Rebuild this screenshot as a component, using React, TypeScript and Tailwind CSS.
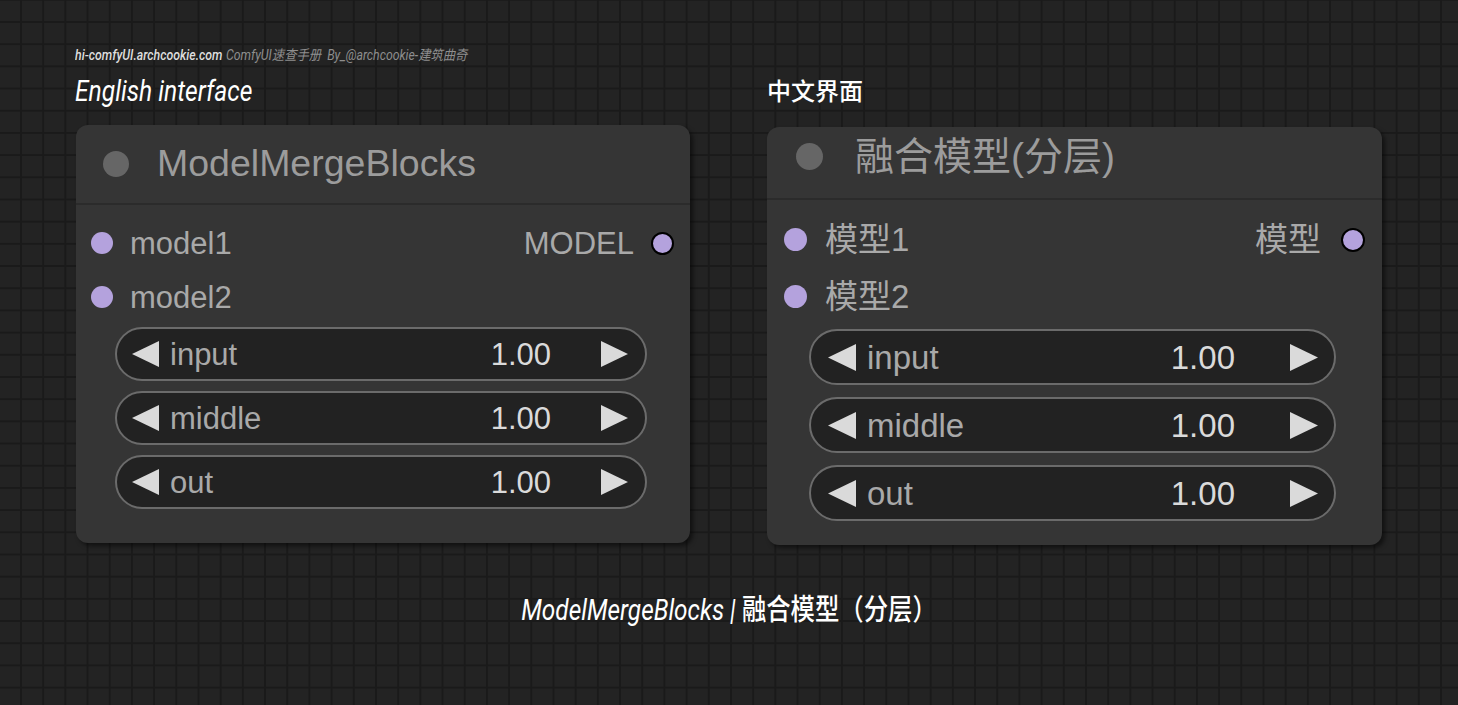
import React from "react"

const cjk = "font-['Liberation_Sans','Noto_Sans_CJK_SC',sans-serif]"
const condensed = "font-['Roboto','Noto_Sans_CJK_SC',sans-serif] italic"

type Variant = {
  box: string
  title: string
  titleDot: string
  titleText: string
  body: string
  row: string
  rowText: string
  outText: string
  inDot: string
  outDot: string
  widgets: string
  pill: string
  arrowGap: string
  valueGap: string
  arrow: string
}

const en: Variant = {
  box: "w-[614px] h-[418px] ml-[1px] mt-[16px]",
  title: "h-[80px] pl-[27px] gap-[28px]",
  titleDot: "w-[26px] h-[26px]",
  titleText: "text-[37.5px]",
  body: "pt-[11px]",
  row: "h-[54px] pl-[15px] pr-[16px]",
  rowText: "text-[31px] ml-[17px]",
  outText: "text-[31px]",
  inDot: "w-[22px] h-[22px]",
  outDot: "w-[23px] h-[23px] ml-[17px]",
  widgets: "mt-[3px] gap-[10px] ml-[39px] w-[532px]",
  pill: "h-[54px] pl-[15px] pr-[17px] text-[31px]",
  arrowGap: "ml-[11px]",
  valueGap: "mr-[50px]",
  arrow: "w-[27px] h-[26px]",
}

const zh: Variant = {
  box: "w-[615px] h-[418px] mt-[20px]",
  title: "h-[73px] pb-[12px] pl-[29px] gap-[32px]",
  titleDot: "w-[27px] h-[27px]",
  titleText: "text-[39px]",
  body: "pt-[11px]",
  row: "h-[57px] pl-[17px] pr-[17px]",
  rowText: "text-[33px] ml-[18px]",
  outText: "text-[33px]",
  inDot: "w-[23px] h-[23px]",
  outDot: "w-[24px] h-[24px] ml-[20px]",
  widgets: "mt-[4px] gap-[12px] ml-[42px] w-[527px]",
  pill: "h-[56px] pl-[17px] pr-[16px] text-[33px]",
  arrowGap: "ml-[11px]",
  valueGap: "mr-[55px]",
  arrow: "w-[28px] h-[27px]",
}

function Arrow({ dir, cls }: { dir: "l" | "r"; cls: string }) {
  return (
    <svg viewBox="0 0 28 27" className={`${cls} shrink-0`}>
      <polygon points={dir === "l" ? "28,0 28,27 0,13.5" : "0,0 0,27 28,13.5"} fill="#dadada" />
    </svg>
  )
}

function Node({
  v,
  title,
  inputs,
  output,
}: {
  v: Variant
  title: string
  inputs: string[]
  output: string
}) {
  const widgets = ["input", "middle", "out"]
  return (
    <div className={`${v.box} rounded-[12px] bg-[#353535] shadow-[3px_3px_4px_rgba(0,0,0,0.5)] flex flex-col ${cjk}`}>
      {/* header */}
      <div className={`${v.title} flex items-center border-b-2 border-[#2b2b2b] shrink-0`}>
        <div className={`${v.titleDot} rounded-full bg-[#666666]`} />
        <span className={`${v.titleText} text-[#9c9c9c] leading-none whitespace-nowrap`}>{title}</span>
      </div>

      <div className={v.body}>
        {inputs.map((name, i) => (
          <div key={name} className={`${v.row} flex items-center`}>
            <div className={`${v.inDot} rounded-full bg-[#b4a2dd] shrink-0`} />
            <span className={`${v.rowText} text-[#a9a9a9] leading-none`}>{name}</span>
            {i === 0 && (
              <>
                <span className={`ml-auto ${v.outText} text-[#a9a9a9] leading-none`}>{output}</span>
                <div className={`${v.outDot} rounded-full bg-[#b4a2dd] border-2 border-black shrink-0`} />
              </>
            )}
          </div>
        ))}

        <div className={`${v.widgets} flex flex-col`}>
          {widgets.map((w) => (
            <div
              key={w}
              className={`${v.pill} flex items-center rounded-full border-2 border-[#6b6b6b] bg-[#222222] leading-none`}
            >
              <Arrow dir="l" cls={v.arrow} />
              <span className={`${v.arrowGap} text-[#a9a9a9]`}>{w}</span>
              <span className={`ml-auto ${v.valueGap} text-[#dadada]`}>1.00</span>
              <Arrow dir="r" cls={v.arrow} />
            </div>
          ))}
        </div>
      </div>
    </div>
  )
}

export default function App() {
  return (
    <div className="w-[1458px] h-[705px] overflow-hidden flex flex-col pt-[45px] bg-[#232323] bg-[linear-gradient(to_right,#1a1a1a_2px,transparent_2px),linear-gradient(to_bottom,#1a1a1a_2px,transparent_2px)] bg-[size:22.2px_22.2px] bg-[position:20px_21px]">
      {/* credit line */}
      <div className="pl-[75px] h-[20px]">
        <div className={`origin-left scale-x-[0.88] leading-[20px] text-[14px] whitespace-nowrap ${condensed}`}>
          <span className="text-[#dedede] font-medium">hi-comfyUI.archcookie.com</span>
          <span className="text-[#8e8e8e] ml-[4px]">ComfyUI速查手册&nbsp; By_@archcookie-建筑曲奇</span>
        </div>
      </div>

      {/* two nodes */}
      <div className="pl-[75px] flex items-start gap-[76px]">
        <div className="w-[616px] flex flex-col">
          <div
            className={`mt-[8px] h-[36px] leading-[36px] text-[30px] text-white origin-left scale-x-[0.82] whitespace-nowrap ${condensed}`}
          >
            English interface
          </div>
          <Node v={en} title="ModelMergeBlocks" inputs={["model1", "model2"]} output="MODEL" />
        </div>
        <div className="flex flex-col">
          <div className={`mt-[12px] h-[30px] leading-[30px] text-[24px] text-white font-medium ${condensed} not-italic`}>
            中文界面
          </div>
          <Node v={zh} title="融合模型(分层)" inputs={["模型1", "模型2"]} output="模型" />
        </div>
      </div>

      {/* caption */}
      <div
        className={`mt-[45px] flex justify-center h-[40px] leading-[40px] text-[29px] text-white scale-x-[0.84] whitespace-nowrap ${condensed}`}
      >
        ModelMergeBlocks |&nbsp;<span className="not-italic font-medium">融合模型（分层）</span>
      </div>
    </div>
  )
}
